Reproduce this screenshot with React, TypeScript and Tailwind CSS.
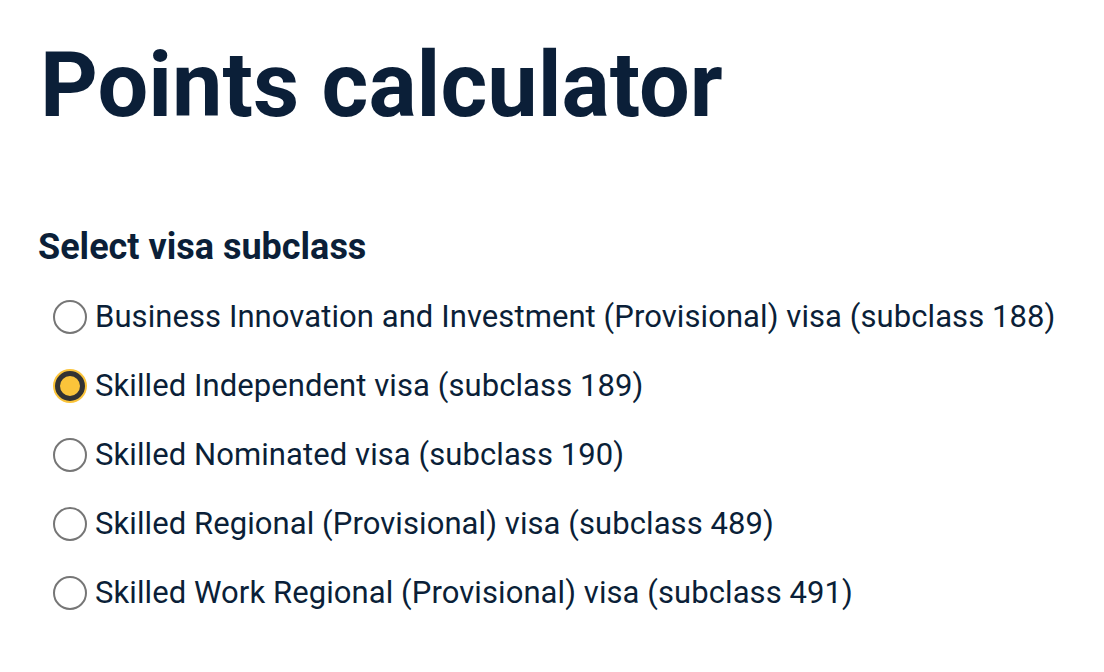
import { useState } from "react";

const options = [
  { value: "188", label: "Business Innovation and Investment (Provisional) visa (subclass 188)" },
  { value: "189", label: "Skilled Independent visa (subclass 189)" },
  { value: "190", label: "Skilled Nominated visa (subclass 190)" },
  { value: "489", label: "Skilled Regional (Provisional) visa (subclass 489)" },
  { value: "491", label: "Skilled Work Regional (Provisional) visa (subclass 491)" },
];

export default function App() {
  const [selected, setSelected] = useState("189");

  return (
    <div className="min-h-screen bg-white pl-10 pt-[41px] text-[#0b1f38] [font-family:Roboto,'Liberation_Sans',sans-serif]">
      <h1 className="text-[90px] font-bold leading-[90px]">Points calculator</h1>

      <fieldset className="mt-[94px]">
        <legend className="-ml-0.5 text-[36px] font-bold leading-[44px]">Select visa subclass</legend>
        <div className="mt-[30px] flex flex-col gap-[34px] pl-[13px]">
          {options.map((option) => {
            const checked = option.value === selected;
            return (
              <label key={option.value} className="flex h-[35px] cursor-pointer items-center gap-2">
                <input
                  type="radio"
                  name="visa"
                  value={option.value}
                  checked={checked}
                  onChange={() => setSelected(option.value)}
                  className="sr-only"
                />
                {checked ? (
                  <span className="grid h-[34px] w-[34px] shrink-0 place-items-center rounded-full bg-[#fbc43a]">
                    <span className="h-[30px] w-[30px] rounded-full border-[5px] border-[#333333] bg-[#fbc43a]" />
                  </span>
                ) : (
                  <span className="h-[34px] w-[34px] shrink-0 rounded-full border-2 border-[#767676] bg-white" />
                )}
                <span className="text-[31px] leading-[35px] tracking-[0.08px]">{option.label}</span>
              </label>
            );
          })}
        </div>
      </fieldset>
    </div>
  );
}
